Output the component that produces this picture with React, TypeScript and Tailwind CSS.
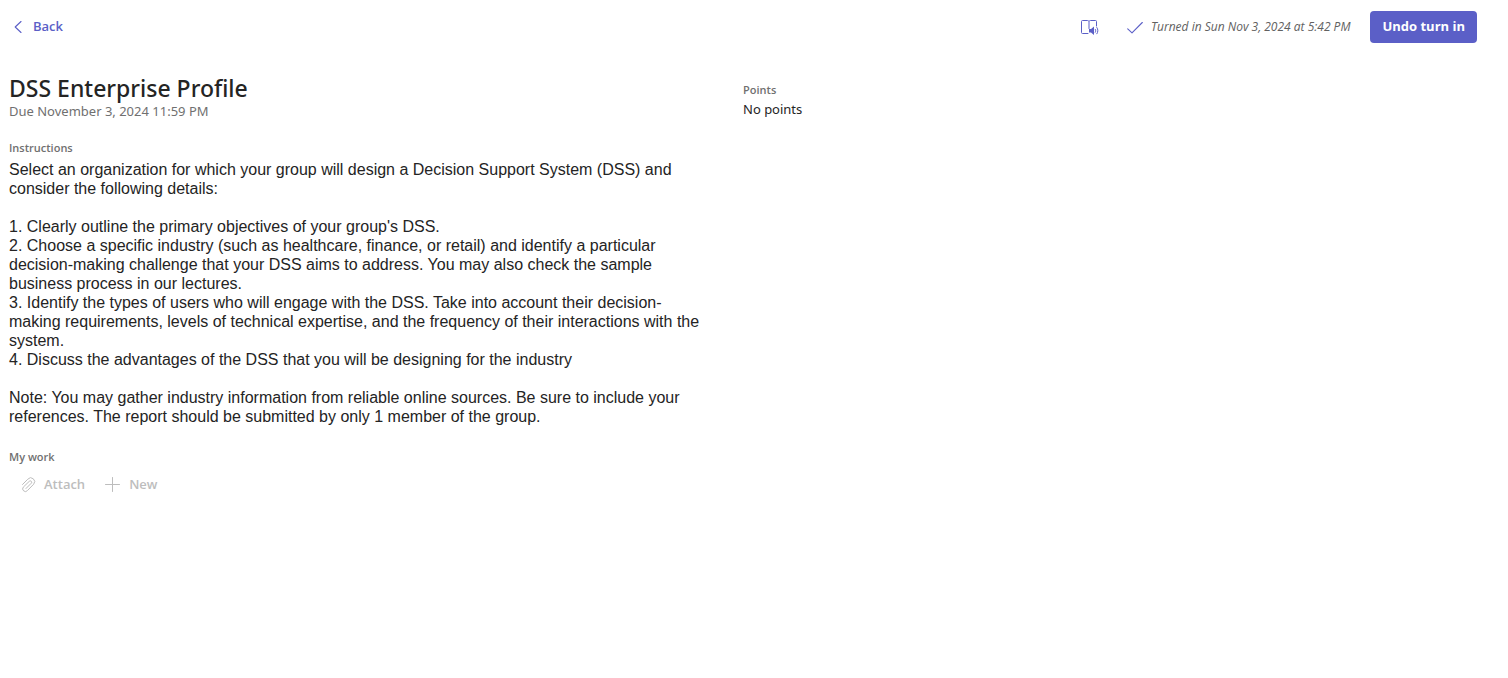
import type { ReactNode } from "react";

function Label({ children }: { children: ReactNode }) {
  return (
    <h2 className="font-['Open_Sans','Segoe_UI',sans-serif] text-[11px] leading-4 font-semibold text-[#707070]">{children}</h2>
  );
}

function BackIcon() {
  return (
    <svg aria-hidden="true" width="16" height="16" viewBox="0 0 16 16" fill="none" stroke="currentColor" strokeWidth="1.1" strokeLinecap="round" strokeLinejoin="round">
      <path d="M12 2.5 6.2 8l5.8 5.5" />
    </svg>
  );
}

function ReaderIcon() {
  return (
    <svg aria-hidden="true" width="20" height="20" viewBox="0 0 20 20" fill="none" stroke="currentColor" strokeLinecap="round" strokeLinejoin="round">
      <path d="M9 16.5H3.5a1 1 0 0 1-1-1v-11a1 1 0 0 1 1-1h5a1.500 1.500 0 0 1 1.500 1 1.500 1.500 0 0 1 1.500-1h5a1 1 0 0 1 1 1V9" />
      <path d="M10 5v6.500" />
      <path d="M10 12h2l3-2.500v8.500L12 15.500h-2z" fill="currentColor" stroke="none" />
      <path d="M16.300 12.300c.6.800.6 2.100 0 3M17.900 10.500c1.300 1.600 1.300 4.700 0 6.300" />
    </svg>
  );
}

function CheckIcon() {
  return (
    <svg aria-hidden="true" width="16" height="16" viewBox="0 0 16 16" fill="none" stroke="#5b5fc7" strokeWidth="1.1" strokeLinecap="round" strokeLinejoin="round">
      <path d="M.7 9.8 5 13.8 15.3 3.5" />
    </svg>
  );
}

function AttachIcon() {
  return (
    <svg aria-hidden="true" width="16" height="16" viewBox="0 0 16 16" fill="none" stroke="currentColor" strokeWidth="1" strokeLinecap="round" strokeLinejoin="round">
      <path d="M1.500 7.500 6.800 2.200a3.800 3.800 0 0 1 5.900 5L6.500 13.500a2.600 2.600 0 0 1-4.200-3.400L8.300 4.300a1.300 1.300 0 0 1 2 1.900L5 11.500" />
    </svg>
  );
}

function PlusIcon() {
  return (
    <svg aria-hidden="true" width="16" height="16" viewBox="0 0 16 16" fill="none" stroke="currentColor" strokeWidth="1" strokeLinecap="round">
      <path d="M7.5 0.5v14M0.5 7.5h14" />
    </svg>
  );
}

export default function App() {
  return (
    <div className="min-h-screen bg-white pr-[31px] pl-[9px] font-['Noto_Sans','Segoe_UI',sans-serif] text-[#242424]">
      <header className="flex items-center justify-between pt-[11px]">
        <button type="button" className="flex h-8 items-center gap-2 font-['Open_Sans','Segoe_UI',sans-serif] text-[13px] font-semibold text-[#5b5fc7]">
          <BackIcon />
          Back
        </button>
        <div className="flex items-center">
          <button type="button" aria-label="Immersive Reader" className="mr-7 text-[#5b5fc7]">
            <ReaderIcon />
          </button>
          <p className="mr-5 flex items-center gap-2 font-['Open_Sans','Segoe_UI',sans-serif] text-[12px] text-[#616161] italic">
            <CheckIcon />
            Turned in Sun Nov 3, 2024 at 5:42 PM
          </p>
          <button type="button" className="h-8 rounded bg-[#5b5fc7] px-3 font-['Open_Sans','Segoe_UI',sans-serif] text-[13px] font-bold text-white">
            Undo turn in
          </button>
        </div>
      </header>

      <main className="grid grid-cols-2 pt-[30px]">
        <section className="pr-8">
          <h1 className="text-[23px] leading-[30px] font-medium">DSS Enterprise Profile</h1>
          <p className="text-[13px] leading-4 text-[#707070]">Due November 3, 2024 11:59 PM</p>

          <div className="mt-[21px]">
            <Label>Instructions</Label>
            <div className="mt-1 font-['Liberation_Sans',Arial,sans-serif] text-[16px] leading-[19px]">
              <p>
                Select an organization for which your group will design a Decision Support System (DSS) and
                consider the following details:
              </p>
              <div className="my-[19px]">
                <p>1. Clearly outline the primary objectives of your group's DSS.</p>
                <p>
                  2. Choose a specific industry (such as healthcare, finance, or retail) and identify a particular
                  decision-making challenge that your DSS aims to address. You may also check the sample business
                  process in our lectures.
                </p>
                <p>
                  3. Identify the types of users who will engage with the DSS. Take into account their
                  decision-making requirements, levels of technical expertise, and the frequency of their
                  interactions with the system.
                </p>
                <p>4. Discuss the advantages of the DSS that you will be designing for the industry</p>
              </div>
              <p>
                Note: You may gather industry information from reliable online sources. Be sure to include your
                references. The report should be submitted by only 1 member of the group.
              </p>
            </div>
          </div>

          <div className="mt-[23px]">
            <Label>My work</Label>
            <div className="mt-1 flex gap-5 pl-3 font-['Open_Sans','Segoe_UI',sans-serif] text-[13px] font-semibold text-[#bdbdbd]">
              <button type="button" disabled className="flex h-8 items-center gap-[7px]">
                <AttachIcon />
                Attach
              </button>
              <button type="button" disabled className="flex h-8 items-center gap-2">
                <PlusIcon />
                New
              </button>
            </div>
          </div>
        </section>

        <section className="pt-[9px]">
          <Label>Points</Label>
          <p className="text-[13px] leading-[22px]">No points</p>
        </section>
      </main>
    </div>
  );
}
